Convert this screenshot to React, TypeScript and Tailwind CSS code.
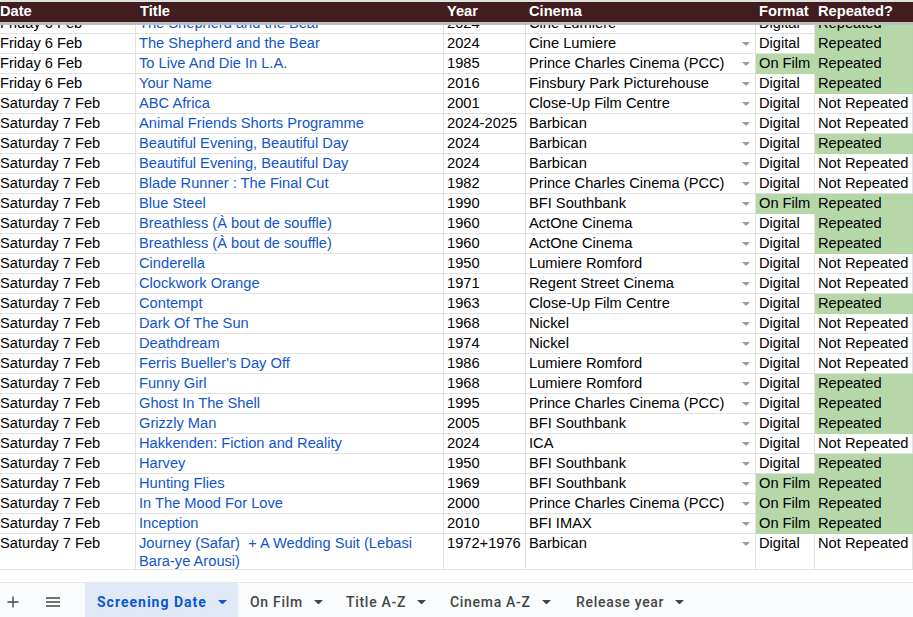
import React from "react";

type Row = [string, string, string, string, string, string];
const R = "Repeated";
const N = "Not Repeated";
const S = "Saturday 7 Feb";
const rows: Row[] = [
  ["Friday 6 Feb", "The Shepherd and the Bear", "2024", "Cine Lumiere", "Digital", R],
  ["Friday 6 Feb", "To Live And Die In L.A.", "1985", "Prince Charles Cinema (PCC)", "On Film", R],
  ["Friday 6 Feb", "Your Name", "2016", "Finsbury Park Picturehouse", "Digital", R],
  [S, "ABC Africa", "2001", "Close-Up Film Centre", "Digital", N],
  [S, "Animal Friends Shorts Programme", "2024-2025", "Barbican", "Digital", N],
  [S, "Beautiful Evening, Beautiful Day", "2024", "Barbican", "Digital", R],
  [S, "Beautiful Evening, Beautiful Day", "2024", "Barbican", "Digital", N],
  [S, "Blade Runner : The Final Cut", "1982", "Prince Charles Cinema (PCC)", "Digital", N],
  [S, "Blue Steel", "1990", "BFI Southbank", "On Film", R],
  [S, "Breathless (À bout de souffle)", "1960", "ActOne Cinema", "Digital", R],
  [S, "Breathless (À bout de souffle)", "1960", "ActOne Cinema", "Digital", R],
  [S, "Cinderella", "1950", "Lumiere Romford", "Digital", N],
  [S, "Clockwork Orange", "1971", "Regent Street Cinema", "Digital", N],
  [S, "Contempt", "1963", "Close-Up Film Centre", "Digital", R],
  [S, "Dark Of The Sun", "1968", "Nickel", "Digital", N],
  [S, "Deathdream", "1974", "Nickel", "Digital", N],
  [S, "Ferris Bueller's Day Off", "1986", "Lumiere Romford", "Digital", N],
  [S, "Funny Girl", "1968", "Lumiere Romford", "Digital", R],
  [S, "Ghost In The Shell", "1995", "Prince Charles Cinema (PCC)", "Digital", R],
  [S, "Grizzly Man", "2005", "BFI Southbank", "Digital", R],
  [S, "Hakkenden: Fiction and Reality", "2024", "ICA", "Digital", N],
  [S, "Harvey", "1950", "BFI Southbank", "Digital", R],
  [S, "Hunting Flies", "1969", "BFI Southbank", "On Film", R],
  [S, "In The Mood For Love", "2000", "Prince Charles Cinema (PCC)", "On Film", R],
  [S, "Inception", "2010", "BFI IMAX", "On Film", R],
];

const grid = "grid grid-cols-[136px_308px_82px_230px_59px_98px]";
const cell = "border-r border-b border-[#e1e1e1] overflow-hidden";
const green = "border-r border-b border-[#b4d5a6] bg-[#b6d7a8] overflow-hidden";

function Caret({ color, w = 9 }: { color: string; w?: number }) {
  return (
    <svg width={w} height={w / 2} viewBox="0 0 10 5" className="shrink-0">
      <path d="M0 0h10L5 5z" fill={color} />
    </svg>
  );
}

function DataRow({ r, tall, clipped }: { r: Row; tall?: boolean; clipped?: boolean }) {
  const h = clipped ? "h-[9px]" : tall ? "h-[36px]" : "h-[20px]";
  const inner = clipped ? "-mt-[11px] whitespace-nowrap" : "whitespace-nowrap";
  return (
    <div className={`${grid} ${h} leading-[19px]`}>
      <div className={cell}><div className={inner}>{r[0]}</div></div>
      <div className={`${cell} pl-[3px] text-[#1155cc]`}>
        {tall ? <div className="leading-[18px]">{r[1]}</div> : <div className={inner}>{r[1]}</div>}
      </div>
      <div className={`${cell} pl-[3px]`}><div className={inner}>{r[2]}</div></div>
      <div className={`${cell} pl-[3px] flex justify-between pr-[5px]`}>
        <div className={inner}>{r[3]}</div>
        {!clipped && <div className="mt-[8px]"><Caret color="#9a9a9a" w={8} /></div>}
      </div>
      <div className={`pl-[3px] ${r[4] === "On Film" ? green : cell}`}><div className={inner}>{r[4]}</div></div>
      <div className={`pl-[3px] ${r[5] === R ? green : cell}`}><div className={inner}>{r[5]}</div></div>
    </div>
  );
}

function Tab({ label, active, w }: { label: string; active?: boolean; w: string }) {
  return (
    <div className={`${w} h-full flex items-center pl-[12px] gap-[11px] pt-[4px] font-['Roboto',sans-serif] text-[14px] ${active ? "bg-[#e1e9f7] text-[#0b57d0] font-bold tracking-[1px]" : "text-[#444746] font-medium tracking-[0.7px]"}`}>
      <span>{label}</span>
      <Caret color={active ? "#0b57d0" : "#444746"} w={9} />
    </div>
  );
}

export default function App() {
  return (
    <div className="w-[913px] h-[617px] overflow-hidden bg-white text-[14.67px] text-black font-['Liberation_Sans',Arial,sans-serif] flex flex-col">
      <div className="h-[2px] bg-[#e1e1e1]" />
      <div className={`${grid} h-[20px] bg-[#421d1f] text-white font-bold leading-[19px]`}>
        <div>Date</div>
        <div className="pl-[4px]">Title</div>
        <div className="pl-[3px]">Year</div>
        <div className="pl-[3px]">Cinema</div>
        <div className="pl-[3px]">Format</div>
        <div className="pl-[3px]">Repeated?</div>
      </div>
      <div className="h-[3px] bg-[#bfbfbf]" />
      <DataRow clipped r={rows[0]} />
      {rows.map((r, i) => <DataRow key={i} r={r} />)}
      <DataRow tall r={[S, "Journey (Safar)\u00a0 + A Wedding Suit (Lebasi Bara-ye Arousi)", "1972+1976", "Barbican", "Digital", N]} />
      <div className="h-[12px]" />
      <div className="flex-1 border-t border-[#e3e6ea] bg-[#f9fbfd] flex items-stretch">
        <div className="w-[85px] flex items-center pt-[4px]">
          <svg width="14" height="14" viewBox="0 0 14 14" className="ml-[6px]"><path d="M7 1.5v11M1.5 7h11" stroke="#444746" strokeWidth="1.4" /></svg>
          <svg width="16" height="12" viewBox="0 0 16 12" className="ml-[25px]"><path d="M1 2h14M1 6h14M1 10h14" stroke="#444746" strokeWidth="1.5" /></svg>
        </div>
        <Tab active label="Screening Date" w="w-[153px]" />
        <Tab label="On Film" w="w-[96px]" />
        <Tab label="Title A-Z" w="w-[104px]" />
        <Tab label="Cinema A-Z" w="w-[126px]" />
        <Tab label="Release year" w="w-[130px]" />
      </div>
    </div>
  );
}
